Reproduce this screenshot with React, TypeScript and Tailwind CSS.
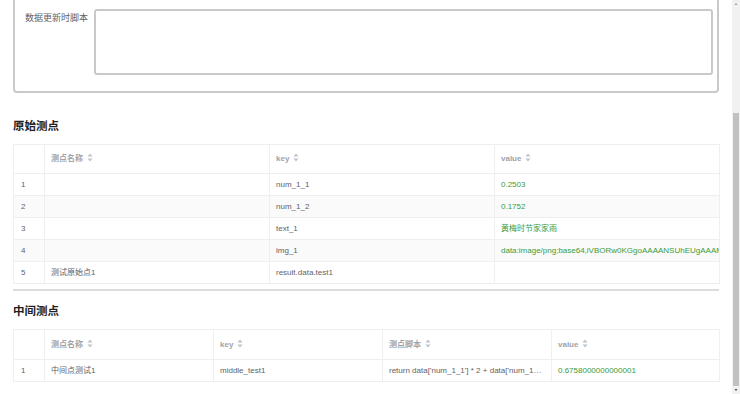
import React from "react";

const font = { fontFamily: '"Liberation Sans", "Noto Sans CJK SC", sans-serif' };

function SortIcon() {
  return (
    <svg width="6" height="9" viewBox="0 0 6 9" className="inline-block ml-[4px] align-[-1px]">
      <path d="M3 0.5 L5.6 3.6 L0.4 3.6 Z" fill="#c0c4cc" />
      <path d="M3 8.5 L5.6 5.4 L0.4 5.4 Z" fill="#c0c4cc" />
    </svg>
  );
}

type Col = { title: string; width: number; sortable: boolean };

function DataTable({
  cols,
  rows,
  headerH,
}: {
  cols: Col[];
  rows: { cells: string[]; green: number[]; ellipsis?: number[] }[];
  headerH: number;
}) {
  return (
    <table className="table-fixed border-collapse w-[706px] border border-[#eeeff3]">
      <colgroup>
        {cols.map((c, i) => (
          <col key={i} style={{ width: c.width }} />
        ))}
      </colgroup>
      <thead>
        <tr style={{ height: headerH }}>
          {cols.map((c, i) => (
            <th
              key={i}
              className="border border-[#eeeff3] text-left font-bold text-[8px] text-[#a0a3a8] px-[6px] bg-white"
            >
              {c.title}
              {c.sortable && <SortIcon />}
            </th>
          ))}
        </tr>
      </thead>
      <tbody>
        {rows.map((r, ri) => (
          <tr key={ri} className={ri % 2 === 1 ? "h-[22px] bg-[#fafafa]" : "h-[22px] bg-white"}>
            {r.cells.map((cell, ci) => (
              <td
                key={ci}
                className={
                  "border border-[#eeeff3] text-[8px] px-[6px] whitespace-nowrap overflow-hidden " +
                  (r.green.includes(ci) ? "text-[#3a9a3a] " : "text-[#5f6266] ") +
                  (r.ellipsis?.includes(ci) ? "text-ellipsis" : "text-clip")
                }
              >
                <span className={ci === 0 ? "pl-[1px] text-[#5f6266]" : ""}>{cell}</span>
              </td>
            ))}
          </tr>
        ))}
      </tbody>
    </table>
  );
}

export default function App() {
  const cols1: Col[] = [
    { title: "", width: 31, sortable: false },
    { title: "测点名称", width: 225, sortable: true },
    { title: "key", width: 225, sortable: true },
    { title: "value", width: 225, sortable: true },
  ];
  const rows1 = [
    { cells: ["1", "", "num_1_1", "0.2503"], green: [3] },
    { cells: ["2", "", "num_1_2", "0.1752"], green: [3] },
    { cells: ["3", "", "text_1", "黄梅时节家家雨"], green: [3] },
    {
      cells: ["4", "", "img_1", "data:image/png;base64,iVBORw0KGgoAAAANSUhEUgAAAMgAAADICAYAAACtWK6eAAAAAXNSR0IArs4c6QAAAARnQU1BAACxjwv8YQUAAAAJcEhZcwAADsMAAA7DAcdvqGQAAA"],
      green: [3],
    },
    { cells: ["5", "测试原始点1", "result.data.test1", ""], green: [3] },
  ];
  const cols2: Col[] = [
    { title: "", width: 31, sortable: false },
    { title: "测点名称", width: 169, sortable: true },
    { title: "key", width: 169, sortable: true },
    { title: "测点脚本", width: 169, sortable: true },
    { title: "value", width: 168, sortable: true },
  ];
  const rows2 = [
    {
      cells: ["1", "中间点测试1", "middle_test1", "return data['num_1_1'] * 2 + data['num_1_2'] * 1", "0.6758000000000001"],
      green: [4],
      ellipsis: [3],
    },
  ];

  return (
    <div className="w-[740px] h-[394px] overflow-hidden flex bg-white" style={font}>
      <div className="w-[732px] h-[394px] overflow-hidden pl-[13px] pr-[13px]">
        {/* form fieldset (top scrolled off) */}
        <div className="-mt-[19px] border-2 border-[#c9c9c9] rounded-[4px] pt-[26px] pb-[16px] pl-[10px] pr-[4px] flex">
          <div className="w-[69px] pt-[3px] text-[9px] leading-[12px] text-[#606266]">数据更新时脚本</div>
          <div className="flex-1 h-[66px] border-2 border-[#c9c9c9] rounded-[3px] bg-white" />
        </div>

        <div className="mt-[26px] mb-[11px] h-[14px] leading-[14px] text-[11.5px] font-bold text-[#222]">原始测点</div>
        <DataTable cols={cols1} rows={rows1} headerH={29} />

        <div className="mt-[5px] h-[2px] bg-[#dcdcdc] w-[706px]" />

        <div className="mt-[13px] mb-[11px] h-[14px] leading-[14px] text-[11.5px] font-bold text-[#222]">中间测点</div>
        <DataTable cols={cols2} rows={rows2} headerH={30} />
      </div>

      {/* scrollbar */}
      <div className="relative w-[8px] h-[394px] bg-[#f1f1f1]">
        <svg width="8" height="8" className="absolute top-0 left-0" viewBox="0 0 8 8">
          <path d="M4 3 L5.5 5 L2.5 5 Z" fill="#a3a3a3" />
        </svg>
        <div className="absolute left-[1px] top-[113px] w-[6px] h-[273px] bg-[#c1c1c1]" />
        <svg width="8" height="8" className="absolute bottom-0 left-0" viewBox="0 0 8 8">
          <path d="M4 5 L5.5 3 L2.5 3 Z" fill="#505050" />
        </svg>
      </div>
    </div>
  );
}
